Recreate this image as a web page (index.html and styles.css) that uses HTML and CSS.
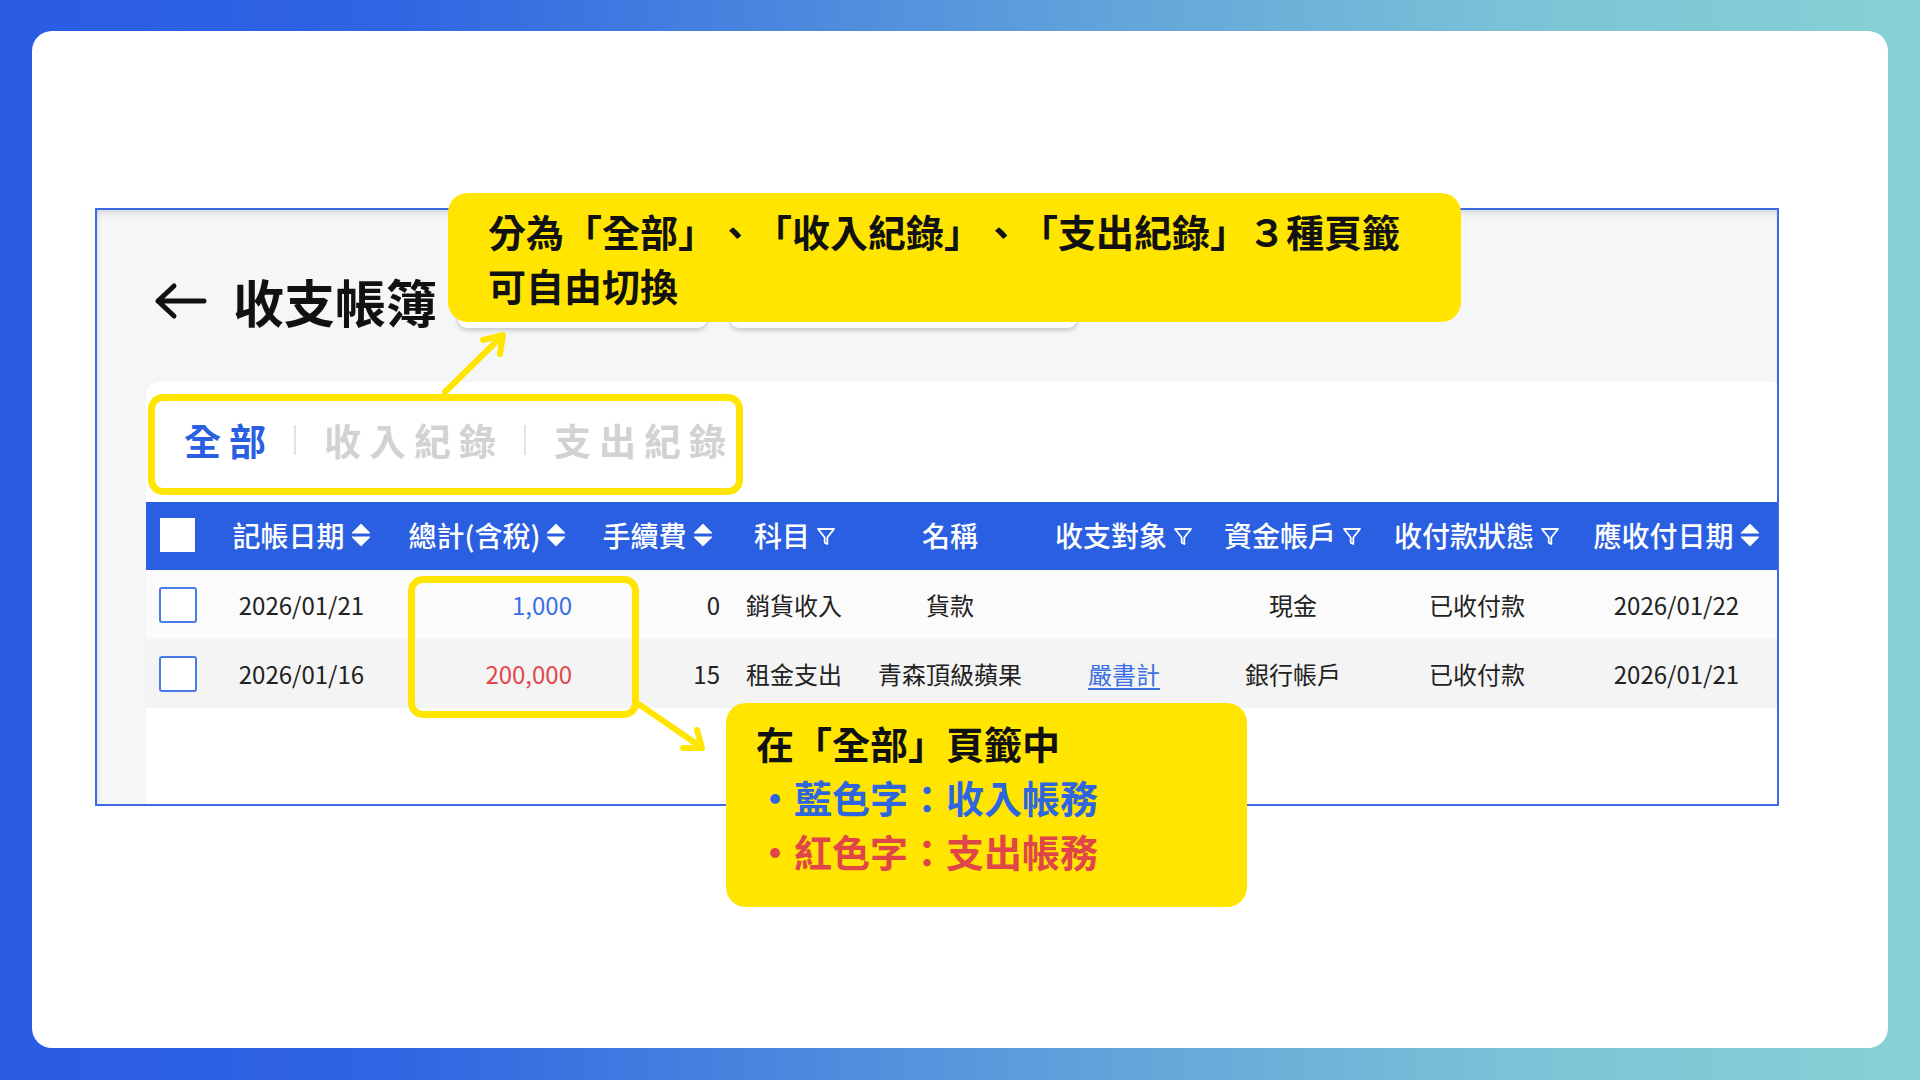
FILE: index.html
```html
<!DOCTYPE html>
<html lang="zh-Hant">
<head>
<meta charset="utf-8">
<title>收支帳簿</title>
<link rel="stylesheet" href="styles.css">
</head>
<body>
<div class="card">
  <div class="shot">
    <div class="topbar">
      <div class="title-row">
        <svg class="back" width="54" height="40" viewBox="0 0 54 40"><path d="M51 20 H5 M21 5 L5 20 L21 35" fill="none" stroke="#111" stroke-width="5" stroke-linecap="round" stroke-linejoin="round"/></svg>
        <h1 class="title">收支帳簿</h1>
        <div class="btn btn-a"></div>
        <div class="btn btn-b"></div>
      </div>
    </div>
    <div class="panel">
      <div class="tabs">
        <span class="tab active">全部</span>
        <span class="sep"></span>
        <span class="tab">收入紀錄</span>
        <span class="sep"></span>
        <span class="tab">支出紀錄</span>
      </div>
      <div class="table">
        <div class="row thead">
          <div class="c"><span class="hbox"></span></div>
          <div class="c">記帳日期<svg class="sort" width="20" height="24" viewBox="0 0 20 24"><path d="M10 1.5 L18.5 10 H1.5Z M1.5 14 H18.5 L10 22.5Z" fill="#fff" stroke="#fff" stroke-width="1.2" stroke-linejoin="round"/></svg></div>
          <div class="c">總計(含稅)<svg class="sort" width="20" height="24" viewBox="0 0 20 24"><path d="M10 1.5 L18.5 10 H1.5Z M1.5 14 H18.5 L10 22.5Z" fill="#fff" stroke="#fff" stroke-width="1.2" stroke-linejoin="round"/></svg></div>
          <div class="c">手續費<svg class="sort" width="20" height="24" viewBox="0 0 20 24"><path d="M10 1.5 L18.5 10 H1.5Z M1.5 14 H18.5 L10 22.5Z" fill="#fff" stroke="#fff" stroke-width="1.2" stroke-linejoin="round"/></svg></div>
          <div class="c">科目<svg class="filter" width="20" height="22" viewBox="0 0 20 22"><path d="M2 4 H18 L11.3 12.5 V19 L8.7 17.6 V12.5 Z" fill="none" stroke="#fff" stroke-width="1.8" stroke-linejoin="round"/></svg></div>
          <div class="c">名稱</div>
          <div class="c">收支對象<svg class="filter" width="20" height="22" viewBox="0 0 20 22"><path d="M2 4 H18 L11.3 12.5 V19 L8.7 17.6 V12.5 Z" fill="none" stroke="#fff" stroke-width="1.8" stroke-linejoin="round"/></svg></div>
          <div class="c">資金帳戶<svg class="filter" width="20" height="22" viewBox="0 0 20 22"><path d="M2 4 H18 L11.3 12.5 V19 L8.7 17.6 V12.5 Z" fill="none" stroke="#fff" stroke-width="1.8" stroke-linejoin="round"/></svg></div>
          <div class="c">收付款狀態<svg class="filter" width="20" height="22" viewBox="0 0 20 22"><path d="M2 4 H18 L11.3 12.5 V19 L8.7 17.6 V12.5 Z" fill="none" stroke="#fff" stroke-width="1.8" stroke-linejoin="round"/></svg></div>
          <div class="c">應收付日期<svg class="sort" width="20" height="24" viewBox="0 0 20 24"><path d="M10 1.5 L18.5 10 H1.5Z M1.5 14 H18.5 L10 22.5Z" fill="#fff" stroke="#fff" stroke-width="1.2" stroke-linejoin="round"/></svg></div>
        </div>
        <div class="row body r1">
          <div class="c"><span class="cbox"></span></div>
          <div class="c">2026/01/21</div>
          <div class="c amt income">1,000</div>
          <div class="c fee">0</div>
          <div class="c left">銷貨收入</div>
          <div class="c">貨款</div>
          <div class="c"></div>
          <div class="c">現金</div>
          <div class="c">已收付款</div>
          <div class="c">2026/01/22</div>
        </div>
        <div class="row body r2">
          <div class="c"><span class="cbox"></span></div>
          <div class="c">2026/01/16</div>
          <div class="c amt expense">200,000</div>
          <div class="c fee">15</div>
          <div class="c left">租金支出</div>
          <div class="c">青森頂級蘋果</div>
          <div class="c"><span class="link">嚴書計</span></div>
          <div class="c">銀行帳戶</div>
          <div class="c">已收付款</div>
          <div class="c">2026/01/21</div>
        </div>
      </div>
    </div>
  </div>

  <div class="hl hl-tabs"></div>
  <div class="hl hl-amt"></div>

  <svg class="arrows" width="1856" height="1017" viewBox="0 0 1856 1017">
    <g fill="none" stroke="#ffe500" stroke-width="6" stroke-linecap="round" stroke-linejoin="round">
      <path d="M413 361 L470 305"/>
      <path d="M451 309 L471 304 L468 323"/>
      <path d="M608 674 L669 716"/>
      <path d="M665 699 L670 717 L651 717"/>
    </g>
  </svg>

  <div class="callout callout-top">分為「全部」、「收入紀錄」、「支出紀錄」３種頁籤<br>可自由切換</div>
  <div class="callout callout-bottom">在「全部」頁籤中<br><span class="blue">・藍色字：收入帳務</span><br><span class="red">・紅色字：支出帳務</span></div>
</div>
</body>
</html>
```

FILE: styles.css
```css
* { box-sizing: border-box; }

html, body {
  margin: 0;
  padding: 0;
}

body {
  width: 1920px;
  height: 1080px;
  overflow: hidden;
  padding: 31px 32px 32px 32px;
  background: linear-gradient(90deg, #2a5ce4 0%, #2f64e2 20%, #4a86de 40%, #64a8da 60%, #7bc4d7 80%, #86d2d4 100%);
  font-family: "Noto Sans CJK TC", "Noto Sans", sans-serif;
  text-spacing-trim: space-all;
}

.card {
  position: relative;
  width: 1856px;
  height: 1017px;
  background: #ffffff;
  border-radius: 20px;
  padding: 177px 0 0 63px;
}

.shot {
  width: 1684px;
  height: 598px;
  border: 2px solid #3d69e6;
  background: #f5f6f8;
  overflow: hidden;
  box-shadow: inset 0 6px 6px -3px rgba(0, 0, 0, 0.13), inset 4px 0 5px -3px rgba(0, 0, 0, 0.08);
  display: flex;
  flex-direction: column;
}

.topbar {
  height: 172px;
  flex: none;
  padding: 56px 0 0 56px;
}

.title-row {
  display: flex;
  align-items: center;
  height: 70px;
}

.back {
  flex: none;
  margin-right: 26px;
}

.title {
  margin: 0;
  font-size: 51px;
  font-weight: 700;
  color: #111;
  line-height: 70px;
  letter-spacing: 0;
}

.btn {
  align-self: flex-start;
  margin-top: 6px;
  height: 56px;
  background: #fff;
  border-radius: 9px;
  box-shadow: 0 2px 5px rgba(0, 0, 0, 0.22);
}

.btn-a { width: 249px; margin-left: 21px; }
.btn-b { width: 347px; margin-left: 23px; }

.panel {
  flex: 1;
  margin-left: 49px;
  background: #fff;
  border-top-left-radius: 14px;
}

.tabs {
  height: 120px;
  display: flex;
  align-items: center;
  padding-left: 38px;
  padding-bottom: 4px;
  gap: 20px;
}

.tab {
  font-size: 37px;
  font-weight: 700;
  letter-spacing: 8px;
  color: #d2d2d2;
  line-height: 1;
}

.sep + .tab { margin-left: 8px; }

.tab.active { color: #2b5fe2; }

.sep {
  width: 2px;
  height: 30px;
  background: #e2e2e2;
}

.row {
  display: grid;
  grid-template-columns: 67px 177px 195px 145px 130px 180px 168px 170px 198px 201px;
}

.thead {
  height: 68px;
  padding-bottom: 3px;
  background: #2b5fe2;
  color: #fff;
  font-size: 28px;
  font-weight: 500;
}

.body {
  height: 69px;
  font-size: 24px;
  color: #222;
}

.r1 { background: #fbfbfb; }
.r2 { background: #f4f4f4; }

.c {
  display: flex;
  align-items: center;
  justify-content: center;
  white-space: nowrap;
}

.sort { margin-left: 6px; }
.filter { margin-left: 6px; margin-top: 3px; }

.hbox {
  width: 35px;
  height: 34px;
  background: #fff;
  margin-left: -4px;
}

.cbox {
  width: 38px;
  height: 36px;
  background: #fff;
  border: 2px solid #4a7be8;
  border-radius: 3px;
  margin-left: -4px;
}

.amt {
  justify-content: flex-end;
  padding-right: 13px;
}

.fee {
  justify-content: flex-end;
  padding-right: 10px;
}

.left {
  justify-content: flex-start;
  padding-left: 16px;
}

.income { color: #3b6fe6; }
.expense { color: #e2474d; }

.link {
  color: #3b6fe6;
  text-decoration: underline;
  text-underline-offset: 4px;
}

.hl {
  position: absolute;
  border: 7px solid #ffe500;
  border-radius: 15px;
}

.hl-tabs {
  left: 116px;
  top: 363px;
  width: 595px;
  height: 101px;
}

.hl-amt {
  left: 376px;
  top: 545px;
  width: 231px;
  height: 142px;
}

.arrows {
  position: absolute;
  left: 0;
  top: 0;
  pointer-events: none;
}

.callout {
  position: absolute;
  background: #ffe500;
  border-radius: 20px;
  font-size: 38px;
  font-weight: 700;
  line-height: 54px;
  color: #111;
  white-space: nowrap;
}

.callout-top {
  left: 416px;
  top: 162px;
  width: 1013px;
  height: 129px;
  padding: 11px 0 0 40px;
}

.callout-bottom {
  left: 694px;
  top: 672px;
  width: 521px;
  height: 204px;
  padding: 13px 0 0 30px;
}

.blue { color: #2f66e0; }
.red { color: #e0454a; }
```
